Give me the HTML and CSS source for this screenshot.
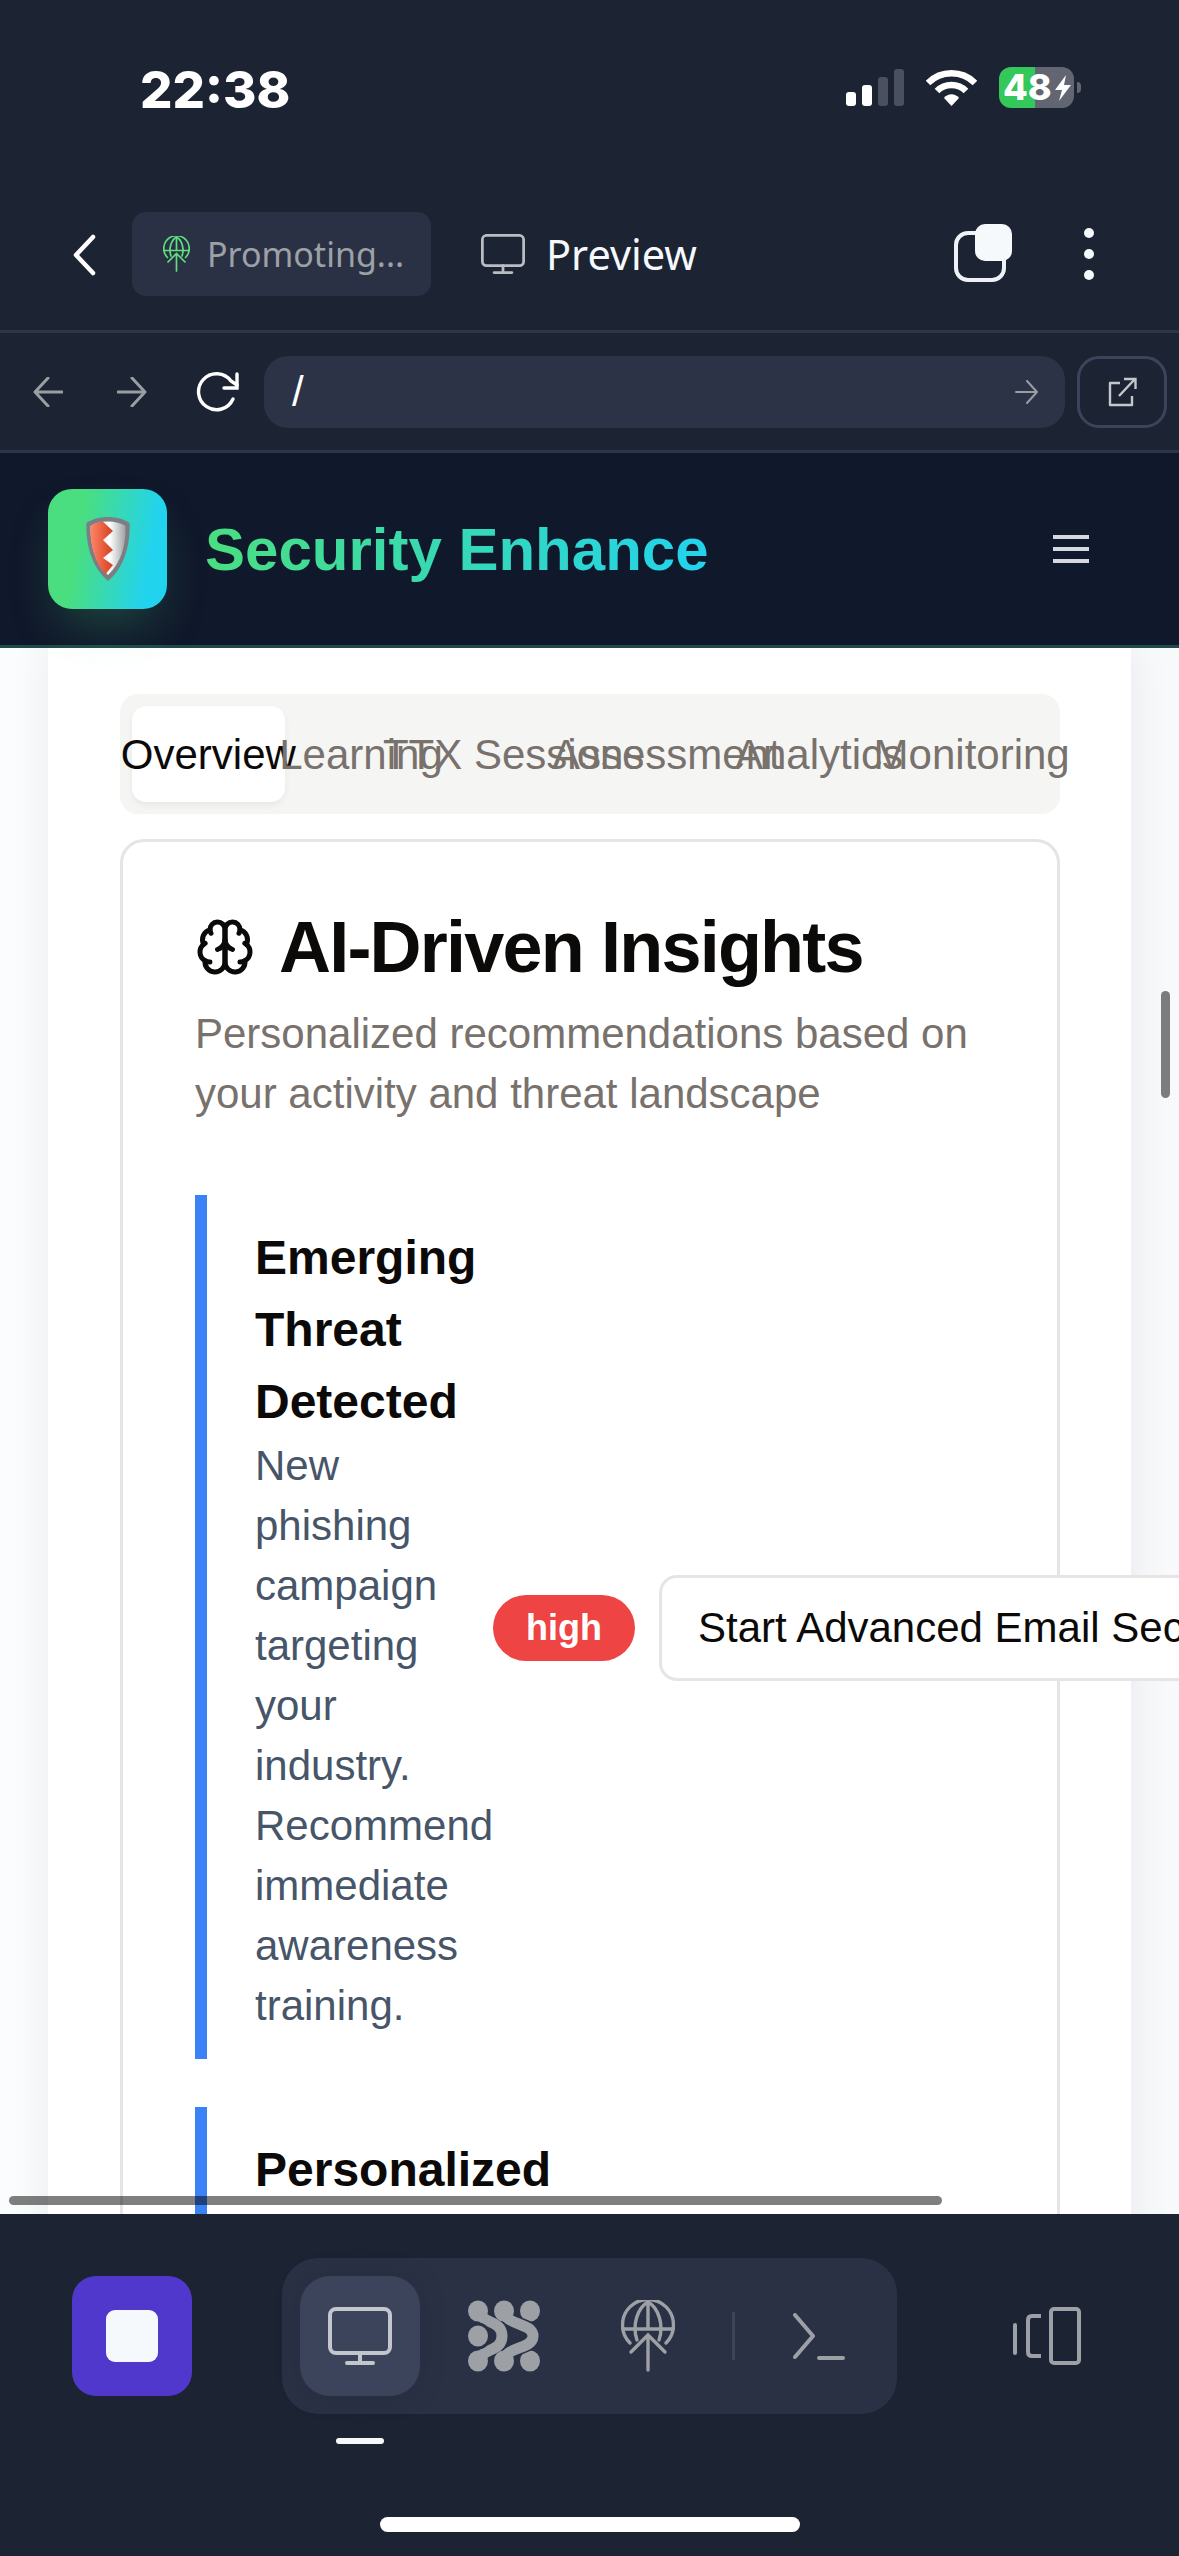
FILE: index.html
```html
<!DOCTYPE html>
<html lang="en">
<head>
<meta charset="UTF-8">
<meta name="viewport" content="width=device-width, initial-scale=1.0">
<title>Security Enhance</title>
<link rel="stylesheet" href="styles.css">
</head>
<body>
  <svg class="defs" width="0" height="0">
    <symbol id="monitor" viewBox="0 0 64 58">
      <rect x="2" y="2" width="60" height="44" rx="6" fill="none" stroke="currentColor" stroke-width="4"/>
      <path d="M32 46v10M19 56h26" fill="none" stroke="currentColor" stroke-width="4" stroke-linecap="round"/>
    </symbol>
    <symbol id="globe-up" viewBox="0 0 54 72">
      <g fill="none" stroke="currentColor" stroke-width="3.4" stroke-linecap="round">
        <path d="M9 43A25.5 25.5 0 1 1 45 43"/>
        <path d="M16 40C11 26 16 8 27 2C38 8 43 26 38 40"/>
        <path d="M27 2V28M2 29H52"/>
        <path d="M10 52L27 35L44 52M27 35V70"/>
      </g>
    </symbol>
    <linearGradient id="shieldMetal" x1="0" x2="1" y1="0" y2="0">
      <stop offset="0" stop-color="#d8d8da"/>
      <stop offset="0.55" stop-color="#ffffff"/>
      <stop offset="1" stop-color="#9fa1a4"/>
    </linearGradient>
    <linearGradient id="shieldRed" x1="0" x2="1" y1="0" y2="0">
      <stop offset="0" stop-color="#ff8468"/>
      <stop offset="1" stop-color="#d5401f"/>
    </linearGradient>
  </svg>

  <div class="phone">
    <div class="status">
      <span class="time">22:38</span>
      <div class="status-icons">
        <div class="signal">
          <i class="bar bar-1"></i>
          <i class="bar bar-2"></i>
          <i class="bar bar-3 off"></i>
          <i class="bar bar-4 off"></i>
        </div>
        <svg class="wifi" viewBox="0 0 51 37">
          <path d="M2 14C15 1 36 1 49 14" fill="none" stroke="#fff" stroke-width="6.5"/>
          <path d="M11 22C19 14 32 14 40 22" fill="none" stroke="#fff" stroke-width="6.5"/>
          <path d="M18 29C22 24 29 24 33 29L25.5 37Z" fill="#fff"/>
        </svg>
        <div class="battery">
          <div class="battery-body">
            <span class="battery-num">48</span>
            <svg class="bolt" viewBox="0 0 18 26"><path d="M12 0L1 15H8L5 26L17 10H10Z" fill="#fff"/></svg>
          </div>
          <i class="battery-nub"></i>
        </div>
      </div>
    </div>

    <div class="topbar">
      <svg class="back" viewBox="0 0 24 42"><path d="M21 3L4 21L21 39" fill="none" stroke="#fff" stroke-width="4.5" stroke-linecap="round" stroke-linejoin="round"/></svg>
      <div class="chip">
        <svg class="chip-icon"><use href="#globe-up"/></svg>
        <span>Promoting...</span>
      </div>
      <div class="preview">
        <svg class="preview-icon"><use href="#monitor"/></svg>
        <span>Preview</span>
      </div>
      <div class="tabs-stack">
        <i class="stack-back"></i>
        <i class="stack-front"></i>
      </div>
      <div class="dots"><i></i><i></i><i></i></div>
    </div>

    <div class="navrow">
      <svg class="nav-arrow" viewBox="0 0 30 30"><path d="M29 15H2M15 1L2 15L15 29" fill="none" stroke="currentColor" stroke-width="3" stroke-linecap="round" stroke-linejoin="round"/></svg>
      <svg class="nav-arrow fwd" viewBox="0 0 30 30"><path d="M1 15H28M15 1L28 15L15 29" fill="none" stroke="currentColor" stroke-width="3" stroke-linecap="round" stroke-linejoin="round"/></svg>
      <svg class="reload" viewBox="0 0 44 40"><path d="M37 27A18 18 0 1 1 35 9L41 13" fill="none" stroke="#fff" stroke-width="3.4" stroke-linecap="round"/><path d="M41 2V16H28" fill="none" stroke="#fff" stroke-width="3.4" stroke-linecap="round"/></svg>
      <div class="address">
        <span class="path">/</span>
        <svg class="go" viewBox="0 0 24 24"><path d="M1 12H22M12 1L22 12L12 23" fill="none" stroke="currentColor" stroke-width="2" stroke-linecap="round" stroke-linejoin="round"/></svg>
      </div>
      <div class="open-btn">
        <svg class="open-icon" viewBox="0 0 30 30"><path d="M13 6H3V28H25V19" fill="none" stroke="currentColor" stroke-width="2.4" stroke-linejoin="round"/><path d="M12 19L28 2M17 2H28.500V12" fill="none" stroke="currentColor" stroke-width="2.4"/></svg>
      </div>
    </div>

    <header class="site-header">
      <div class="logo">
        <svg class="shield" viewBox="0 0 44 64">
          <path d="M22 0C30 0 38 2 43.500 6C44.500 28 38 51 22 64C6 51 -0.500 28 0.500 6C6 2 14 0 22 0Z" fill="#7c7e81"/>
          <path d="M22 4.500C29 4.500 35 6 39.500 9C40 28 35 46 22 58C9 46 4 28 4.500 9C9 6 15 4.500 22 4.500Z" fill="url(#shieldMetal)"/>
          <path d="M17 4.700C12 5.200 8 6.700 4.500 9C4 28 9 46 19 56L18 59L27 48L17 41L27 33L17 23L27 14L17 4.700Z" fill="url(#shieldRed)"/>
        </svg>
      </div>
      <span class="brand">Security Enhance</span>
      <div class="burger"><i></i><i></i><i></i></div>
    </header>

    <main class="content">
      <div class="panel">
        <div class="tabs">
          <div class="tab active">Overview</div>
          <div class="tab">Learning</div>
          <div class="tab">TTX Sessions</div>
          <div class="tab">Assessment</div>
          <div class="tab">Analytics</div>
          <div class="tab">Monitoring</div>
        </div>

        <section class="card">
          <h2 class="card-title">
            <svg class="brain" viewBox="0 0 24 24" fill="none" stroke="currentColor" stroke-width="2" stroke-linecap="round" stroke-linejoin="round">
              <path d="M12 5a3 3 0 1 0-5.997.125 4 4 0 0 0-2.526 5.77 4 4 0 0 0 .556 6.588A4 4 0 1 0 12 18Z"/>
              <path d="M12 5a3 3 0 1 1 5.997.125 4 4 0 0 1 2.526 5.77 4 4 0 0 1-.556 6.588A4 4 0 1 1 12 18Z"/>
              <path d="M15 13a4.500 4.500 0 0 1-3-4 4.500 4.500 0 0 1-3 4"/>
              <path d="M17.599 6.500a3 3 0 0 0 .399-1.375"/>
              <path d="M6.003 5.125A3 3 0 0 0 6.401 6.500"/>
              <path d="M3.477 10.896a4 4 0 0 1 .585-.396"/>
              <path d="M19.938 10.500a4 4 0 0 1 .585.396"/>
              <path d="M6 18a4 4 0 0 1-1.967-.516"/>
              <path d="M19.967 17.484A4 4 0 0 1 18 18"/>
            </svg>
            AI-Driven Insights
          </h2>
          <p class="card-desc">Personalized recommendations based on your activity and threat landscape</p>

          <div class="insight">
            <div class="insight-text">
              <h4>Emerging Threat Detected</h4>
              <p>New phishing campaign targeting your industry. Recommend immediate awareness training.</p>
            </div>
            <span class="badge">high</span>
            <button class="action">Start Advanced Email Security Training</button>
          </div>

          <div class="insight">
            <div class="insight-text">
              <h4>Personalized Learning Path Ready</h4>
              <p>Based on your assessment results we built a new training path for you to follow this month.</p>
            </div>
            <span class="badge">medium</span>
            <button class="action">View Learning Path</button>
          </div>
        </section>
      </div>
      <i class="scroll-h"></i>
      <i class="scroll-v"></i>
    </main>

    <footer class="dock-area">
      <div class="dock-row">
        <div class="stop"><i></i></div>
        <div class="dock-wrap">
          <div class="dock">
            <div class="dock-item current"><svg class="dock-monitor"><use href="#monitor"/></svg></div>
            <div class="dock-item">
              <svg class="agent" viewBox="0 0 72 72">
                <path d="M11 12C14 24 34 20 34 36C34 52 14 48 11 60" fill="none" stroke="#9da1a6" stroke-width="11"/>
                <g fill="#9da1a6">
                  <ellipse cx="10" cy="11" rx="10" ry="10.500"/>
                  <ellipse cx="10" cy="61" rx="10" ry="10.500"/>
                  <ellipse cx="62" cy="11" rx="10" ry="10.500"/>
                  <ellipse cx="62" cy="61" rx="10" ry="10.500"/>
                </g>
                <ellipse cx="10" cy="36" rx="11.500" ry="12" fill="#9da1a6" stroke="#2b3145" stroke-width="3"/>
                <path d="M36 10C36 26 65 22 65 36C65 50 36 46 36 62" fill="none" stroke="#2b3145" stroke-width="14"/>
                <path d="M36 10C36 26 65 22 65 36C65 50 36 46 36 62" fill="none" stroke="#9da1a6" stroke-width="11"/>
                <ellipse cx="36" cy="11" rx="10" ry="10.500" fill="#9da1a6"/>
                <ellipse cx="36" cy="61" rx="10" ry="10.500" fill="#9da1a6"/>
              </svg>
            </div>
            <div class="dock-item"><svg class="dock-globe"><use href="#globe-up"/></svg></div>
            <i class="dock-sep"></i>
            <div class="dock-item">
              <svg class="terminal" viewBox="0 0 52 47"><path d="M2 2L20 23L2 44M26 45H50" fill="none" stroke="#9da1a6" stroke-width="4" stroke-linecap="round" stroke-linejoin="round"/></svg>
            </div>
          </div>
          <i class="dock-mark"></i>
        </div>
        <svg class="devices" viewBox="0 0 68 58" fill="none" stroke="#9da1a6" stroke-width="4">
          <rect x="38" y="2" width="28" height="54" rx="3"/>
          <path d="M28 9H19Q15 9 15 13V45Q15 49 19 49H28"/>
          <path d="M2 18V46" stroke-linecap="round"/>
        </svg>
      </div>
      <i class="home-bar"></i>
    </footer>
  </div>
</body>
</html>
```

FILE: styles.css
```css
* {
  box-sizing: border-box;
}

html, body {
  margin: 0;
  padding: 0;
}

body {
  width: 1179px;
  height: 2556px;
  overflow: hidden;
  font-family: "Liberation Sans", Arial, sans-serif;
  background-color: #1c2333;
}

i {
  display: block;
}

.defs {
  position: absolute;
}

.phone {
  display: flex;
  flex-direction: column;
  height: 2556px;
}

/* status bar */
.status {
  display: flex;
  justify-content: space-between;
  height: 212px;
  padding: 60px 98px 0 140px;
}

.time {
  margin-top: 3px;
  font-family: Inter, sans-serif;
  font-weight: 800;
  font-size: 51px;
  line-height: 54px;
  color: #fff;
}

.status-icons {
  display: flex;
  align-items: flex-start;
  height: 48px;
  padding-top: 7px;
}

.signal {
  display: flex;
  align-items: flex-end;
  gap: 6px;
  height: 37px;
  margin-top: 2px;
}

.bar {
  width: 10px;
  border-radius: 3px;
  background-color: #fff;
}

.bar.off {
  background-color: #4a5060;
}

.bar-1 { height: 14px; }
.bar-2 { height: 21px; }
.bar-3 { height: 29px; }
.bar-4 { height: 37px; }

.wifi {
  width: 51px;
  height: 37px;
  margin: 2px 0 0 22px;
}

.battery {
  display: flex;
  align-items: center;
  margin-left: 22px;
}

.battery-body {
  display: flex;
  align-items: center;
  width: 75px;
  height: 41px;
  padding-left: 4px;
  border-radius: 12px;
  background: linear-gradient(90deg, #34c759 36px, #626672 36px);
}

.battery-num {
  font-family: Inter, sans-serif;
  font-weight: 800;
  font-size: 36px;
  line-height: 41px;
  color: #fff;
}

.bolt {
  width: 18px;
  height: 26px;
  margin-left: 2px;
}

.battery-nub {
  width: 4px;
  height: 11px;
  margin-left: 3px;
  border-radius: 0 4px 4px 0;
  background-color: #626672;
}

/* top bar */
.topbar {
  display: flex;
  align-items: flex-start;
  height: 118px;
  padding-left: 72px;
}

.back {
  width: 24px;
  height: 42px;
  margin-top: 22px;
}

.chip {
  display: flex;
  align-items: center;
  gap: 17px;
  flex-shrink: 0;
  width: 299px;
  height: 84px;
  margin-left: 36px;
  padding-left: 31px;
  border-radius: 14px;
  background-color: #2b3145;
  font-family: "Noto Sans", sans-serif;
  font-size: 34px;
  color: #9da1a6;
}

.chip-icon {
  width: 27px;
  height: 36px;
  color: #5fe07f;
}

.preview {
  display: flex;
  align-items: center;
  gap: 21px;
  flex-shrink: 0;
  width: 217px;
  height: 84px;
  margin-left: 50px;
  font-family: "Noto Sans", sans-serif;
  font-size: 41.5px;
  color: #f5f9fc;
}

.preview-icon {
  width: 44px;
  height: 40px;
  color: #b9bdc3;
}

.tabs-stack {
  position: relative;
  flex-shrink: 0;
  width: 58px;
  height: 58px;
  margin: 12px 0 0 256px;
}

/* the filled square sits on the outlined one */
.stack-back {
  position: absolute;
  left: 0;
  top: 7px;
  width: 52px;
  height: 51px;
  border: 4px solid #eef2f7;
  border-radius: 14px;
}

.stack-front {
  position: absolute;
  left: 21px;
  top: 0;
  width: 37px;
  height: 37px;
  border-radius: 10px;
  background-color: #f5f9fc;
}

.dots {
  display: flex;
  flex-direction: column;
  gap: 11px;
  margin: 16px 0 0 72px;
}

.dots i {
  width: 10px;
  height: 10px;
  border-radius: 50%;
  background-color: #f5f9fc;
}

/* browser nav row */
.navrow {
  display: flex;
  align-items: center;
  height: 123px;
  padding: 0 12px 0 33px;
  border-top: 3px solid #2f3549;
  border-bottom: 3px solid #2f3549;
}

.nav-arrow {
  width: 30px;
  height: 30px;
  color: #9a9ea3;
}

.nav-arrow.fwd {
  margin-left: 54px;
}

.reload {
  width: 44px;
  height: 40px;
  margin-left: 49px;
}

.address {
  display: flex;
  align-items: center;
  justify-content: space-between;
  width: 801px;
  height: 72px;
  margin-left: 24px;
  padding: 0 26px 0 28px;
  border-radius: 24px;
  background-color: #2d3347;
}

.path {
  font-size: 42px;
  color: #fff;
}

.go {
  width: 24px;
  height: 24px;
  color: #9a9ea3;
}

.open-btn {
  display: flex;
  align-items: center;
  justify-content: center;
  width: 90px;
  height: 72px;
  margin-left: 12px;
  border: 3px solid #3c445c;
  border-radius: 22px;
}

.open-icon {
  width: 30px;
  height: 30px;
  color: #c3c7cd;
}

/* site header */
.site-header {
  position: relative;
  z-index: 2;
  display: flex;
  align-items: center;
  height: 195px;
  padding: 0 90px 0 48px;
  border-bottom: 3px solid #1f4a4a;
  background-color: #10182b;
}

.logo {
  display: flex;
  align-items: center;
  justify-content: center;
  width: 119px;
  height: 120px;
  border-radius: 24px;
  background: linear-gradient(100deg, #4ade80 28%, #22d3ee 82%);
  box-shadow: 0 25px 50px -12px rgba(74, 222, 128, 0.25);
}

.shield {
  width: 44px;
  height: 64px;
}

.brand {
  margin-left: 38px;
  font-weight: 700;
  font-size: 60px;
  background: linear-gradient(90deg, #4ade80, #22d3ee);
  -webkit-background-clip: text;
  background-clip: text;
  color: transparent;
}

.burger {
  display: flex;
  flex-direction: column;
  gap: 8px;
  margin-left: auto;
}

.burger i {
  width: 36px;
  height: 4px;
  background-color: #d5d8de;
}

/* main content */
.content {
  position: relative;
  flex: 1;
  overflow: hidden;
  background: linear-gradient(90deg, #fbfcfd, #f8f9fb 70%);
}

.panel {
  width: 1083px;
  height: 3000px;
  margin-left: 48px;
  padding: 46px 71px 0 72px;
  background-color: #fff;
  box-shadow: 0 0 40px rgba(15, 23, 42, 0.07);
}

.tabs {
  display: grid;
  grid-template-columns: repeat(6, 1fr);
  height: 120px;
  padding: 12px;
  border-radius: 18px;
  background-color: #f5f5f4;
}

.tab {
  display: flex;
  align-items: center;
  justify-content: center;
  min-width: 0;
  padding-top: 2px;
  border-radius: 14px;
  font-size: 42px;
  white-space: nowrap;
  color: #78716c;
}

.tab.active {
  background-color: #fff;
  box-shadow: 0 3px 6px rgba(0, 0, 0, 0.06);
  color: #0c0a09;
}

.card {
  margin-top: 25px;
  padding: 72px;
  border: 3px solid #e7e5e4;
  border-radius: 24px;
  background-color: #fff;
}

.card-title {
  display: flex;
  align-items: center;
  gap: 24px;
  margin: -3px 0 0;
  font-size: 72px;
  line-height: 72px;
  font-weight: 700;
  letter-spacing: -1.8px;
  color: #0c0a09;
}

.brain {
  width: 60px;
  height: 60px;
  flex-shrink: 0;
}

.card-desc {
  margin: 21px 0 71px;
  font-size: 42px;
  line-height: 60px;
  color: #78716c;
}

.insight {
  display: flex;
  align-items: center;
  margin-bottom: 48px;
  padding: 25px 0 23px 48px;
  border-left: 12px solid #3b82f6;
}

.insight-text h4 {
  margin: 0 0 -2px;
  padding-top: 2px;
  font-size: 48px;
  line-height: 72px;
  font-weight: 700;
  color: #0c0a09;
}

.insight-text p {
  margin: 0;
  font-size: 42px;
  line-height: 60px;
  color: #475569;
}

.badge {
  flex-shrink: 0;
  height: 66px;
  margin-right: 24px;
  padding: 0 33px;
  border-radius: 33px;
  background-color: #ef4444;
  font-size: 36px;
  line-height: 66px;
  font-weight: 700;
  color: #fff;
}

.action {
  flex-shrink: 0;
  height: 106px;
  padding: 0 36px;
  border: 3px solid #e7e5e4;
  border-radius: 18px;
  background-color: #fff;
  font-family: inherit;
  font-size: 42px;
  white-space: nowrap;
  color: #0c0a09;
}

.scroll-h {
  position: absolute;
  left: 9px;
  top: 1548px;
  width: 933px;
  height: 9px;
  border-radius: 5px;
  background-color: rgba(0, 0, 0, 0.5);
}

.scroll-v {
  position: absolute;
  left: 1161px;
  top: 343px;
  width: 9px;
  height: 107px;
  border-radius: 5px;
  background-color: rgba(0, 0, 0, 0.5);
}

/* bottom dock */
.dock-area {
  display: flex;
  flex-direction: column;
  height: 342px;
  padding-top: 44px;
  background-color: #1c2333;
}

.dock-row {
  display: flex;
  align-items: flex-start;
  height: 186px;
  padding-left: 72px;
}

.stop {
  display: flex;
  align-items: center;
  justify-content: center;
  width: 120px;
  height: 120px;
  margin-top: 18px;
  border-radius: 24px;
  background-color: #5038cc;
}

.stop i {
  width: 52px;
  height: 52px;
  border-radius: 9px;
  background-color: #f5f9fc;
}

.dock-wrap {
  margin-left: 90px;
}

.dock {
  display: flex;
  align-items: center;
  gap: 24px;
  width: 615px;
  height: 156px;
  padding: 0 18px;
  border-radius: 36px;
  background-color: #2b3145;
}

.dock-item {
  display: flex;
  align-items: center;
  justify-content: center;
  width: 120px;
  height: 120px;
  border-radius: 30px;
}

.dock-item.current {
  background-color: #3c445c;
  box-shadow: 0 0 24px rgba(28, 35, 51, 0.25);
}

.dock-monitor {
  width: 64px;
  height: 58px;
  color: #c3c7cd;
}

.agent {
  width: 72px;
  height: 72px;
}

.dock-globe {
  width: 54px;
  height: 72px;
  color: #9da1a6;
}

.dock-sep {
  width: 3px;
  height: 48px;
  background-color: #3c445c;
}

.terminal {
  width: 52px;
  height: 47px;
}

.dock-mark {
  width: 48px;
  height: 6px;
  margin: 24px 0 0 54px;
  border-radius: 3px;
  background-color: #f5f9fc;
}

.devices {
  width: 68px;
  height: 58px;
  margin: 49px 0 0 116px;
}

.home-bar {
  align-self: center;
  width: 420px;
  height: 15px;
  margin-top: 73px;
  border-radius: 8px;
  background-color: #fff;
}
```
